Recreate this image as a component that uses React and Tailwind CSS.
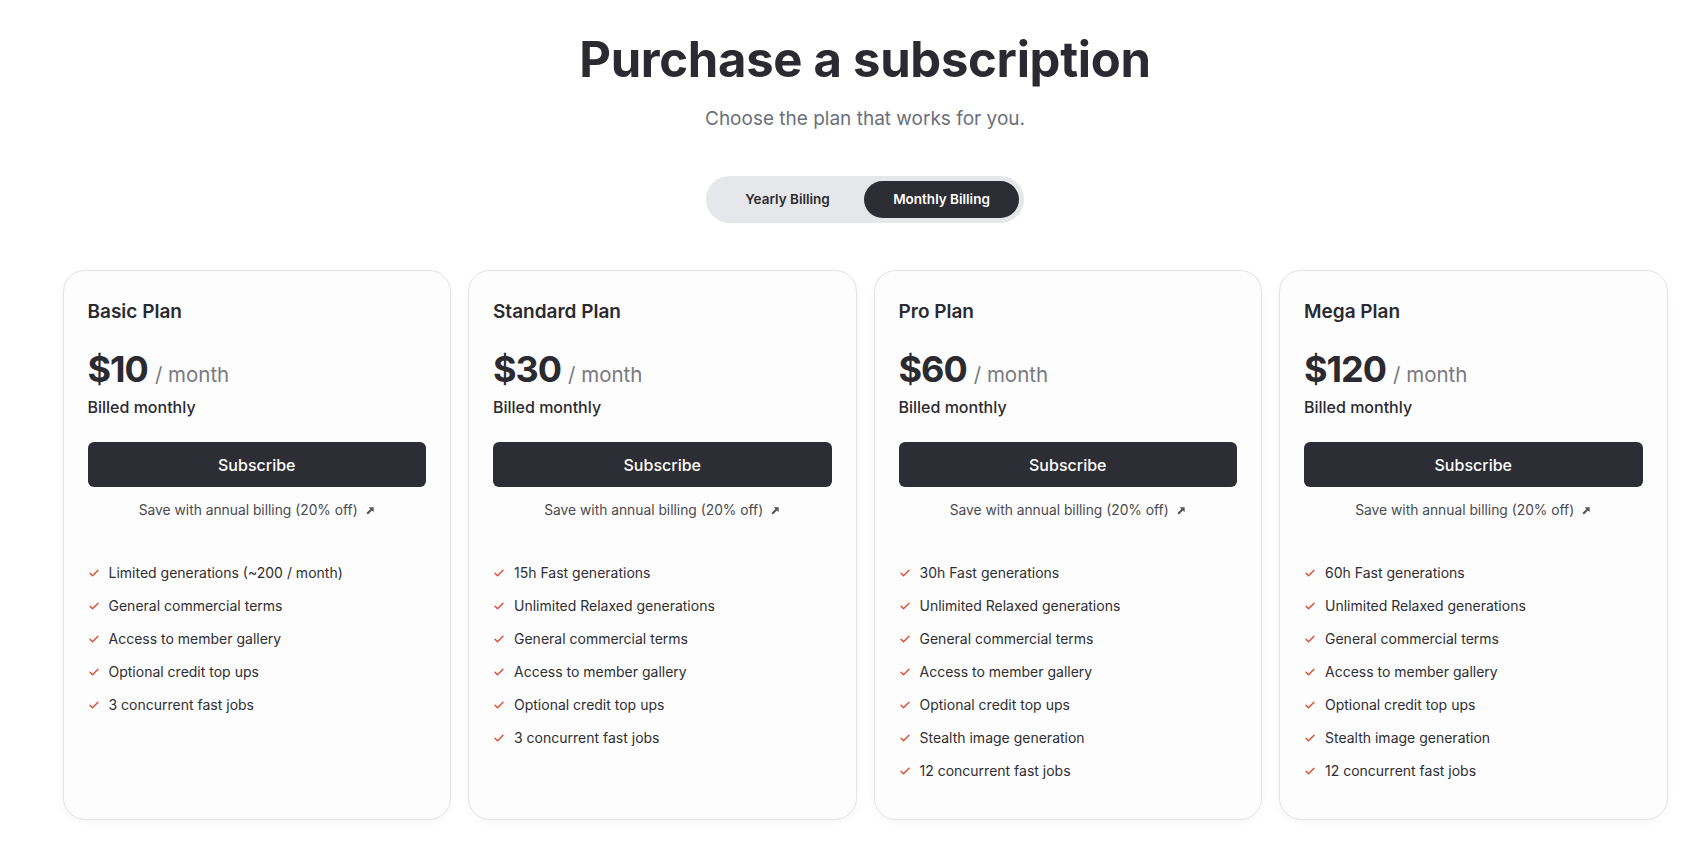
import React, { useState } from 'react';

const plans = [
    {
        name: 'Basic Plan',
        price: '$10',
        features: [
            'Limited generations (~200 / month)',
            'General commercial terms',
            'Access to member gallery',
            'Optional credit top ups',
            '3 concurrent fast jobs',
        ],
    },
    {
        name: 'Standard Plan',
        price: '$30',
        features: [
            '15h Fast generations',
            'Unlimited Relaxed generations',
            'General commercial terms',
            'Access to member gallery',
            'Optional credit top ups',
            '3 concurrent fast jobs',
        ],
    },
    {
        name: 'Pro Plan',
        price: '$60',
        features: [
            '30h Fast generations',
            'Unlimited Relaxed generations',
            'General commercial terms',
            'Access to member gallery',
            'Optional credit top ups',
            'Stealth image generation',
            '12 concurrent fast jobs',
        ],
    },
    {
        name: 'Mega Plan',
        price: '$120',
        features: [
            '60h Fast generations',
            'Unlimited Relaxed generations',
            'General commercial terms',
            'Access to member gallery',
            'Optional credit top ups',
            'Stealth image generation',
            '12 concurrent fast jobs',
        ],
    },
];

const Check = () => (
    <svg width="12" height="12" viewBox="0 0 24 24" fill="none" stroke="#e0452b" strokeWidth="2.5" strokeLinecap="round" strokeLinejoin="round" className="shrink-0">
        <path d="M4 12.5l5 5L20 6.5" />
    </svg>
);

const ArrowUpRight = () => (
    <svg width="9" height="9" viewBox="0 0 10 10" fill="#555" className="inline-block ml-2 -mt-0.5">
        <path d="M3 1.5h5.5V7L6.6 5.1 2.2 9.5 0.5 7.8 4.9 3.4z" />
    </svg>
);

const PlanCard = ({ plan }) => (
    <div className="rounded-[22px] border border-[#e4e4e7] bg-[#fdfdfd] shadow-[0_2px_8px_rgba(0,0,0,0.04)] px-6 pt-[27px] pb-[38px]">
        <h2 className="text-[19px] font-semibold text-[#2a2a30] leading-7">{plan.name}</h2>
        <div className="flex items-baseline mt-[20px]">
            <span className="text-[36px] font-bold text-[#2a2a30] tracking-[-1px] leading-[46px]">{plan.price}</span>
            <span className="text-[20.5px] text-[#7a7a80] ml-[7px]">/ month</span>
        </div>
        <p className="text-[16px] font-medium text-[#2a2a30] mt-[3px] leading-6">Billed monthly</p>
        <button className="w-full h-[45px] mt-[23px] rounded-[6px] bg-[#2d2d35] text-white text-[16px] font-medium">
            Subscribe
        </button>
        <p className="text-center text-[13.8px] text-[#4a4a50] mt-[13px] leading-5">
            Save with annual billing (20% off)<ArrowUpRight />
        </p>
        <ul className="mt-[43px] flex flex-col gap-[13px]">
            {plan.features.map((f) => (
                <li key={f} className="flex items-center gap-[9px] text-[14px] text-[#2e2e33] leading-5">
                    <Check />
                    <span>{f}</span>
                </li>
            ))}
        </ul>
    </div>
);

export default function App() {
    const [billing, setBilling] = useState('monthly');

    return (
        <div className="min-h-screen bg-white pl-[30px] font-['Inter',sans-serif]">
            <div className="flex flex-col items-center pt-[30px]">
                <h1 className="text-[49px] font-bold text-[#2a2a30] tracking-[-0.3px] leading-[60px]">Purchase a subscription</h1>
                <p className="text-[19px] text-[#6b6f7a] mt-[15px] leading-7">Choose the plan that works for you.</p>

                <div className="mt-[43px] flex items-center h-[47px] w-[318px] rounded-full bg-[#e6e7ea] p-[5px]">
                    <button
                        onClick={() => setBilling('yearly')}
                        className={`flex-1 h-full rounded-full text-[13.5px] font-semibold ${billing === 'yearly' ? 'bg-[#2d2d35] text-white' : 'text-[#2a2a30]'}`}
                    >
                        Yearly Billing
                    </button>
                    <button
                        onClick={() => setBilling('monthly')}
                        className={`w-[155px] h-full rounded-full text-[13.5px] font-semibold ${billing === 'monthly' ? 'bg-[#2d2d35] text-white' : 'text-[#2a2a30]'}`}
                    >
                        Monthly Billing
                    </button>
                </div>

                <div className="mt-[47px] grid grid-cols-4 gap-[17px] w-[1605px]">
                    {plans.map((p) => (
                        <PlanCard key={p.name} plan={p} />
                    ))}
                </div>
            </div>
        </div>
    );
}
